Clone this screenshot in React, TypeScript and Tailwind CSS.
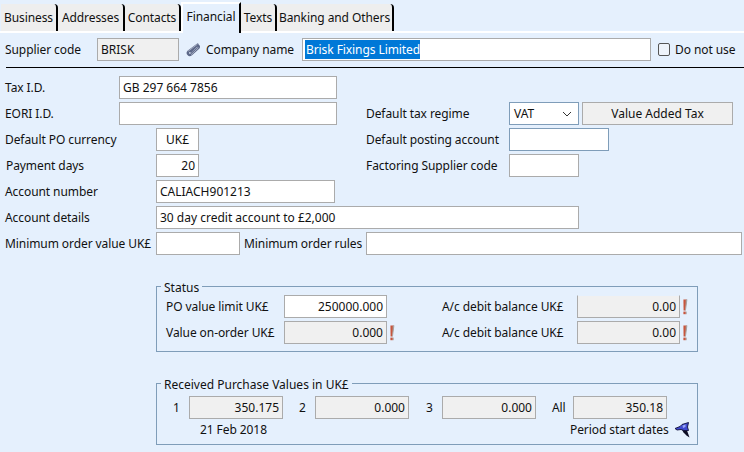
import type { ReactNode } from 'react';

const TABS = [
  { label: 'Business', width: 'w-[57px]' },
  { label: 'Addresses', width: 'w-[67px]' },
  { label: 'Contacts', width: 'w-[56px]' },
  { label: 'Financial', width: 'w-[60px]', active: true },
  { label: 'Texts', width: 'w-[36px]' },
  { label: 'Banking and Others', width: 'w-[117px]' },
];

interface FieldProps {
  value?: string;
  width: string;
  disabled?: boolean;
  right?: boolean;
  center?: boolean;
  blue?: boolean;
  className?: string;
}

function Field({ value, width, disabled, right, center, blue, className = '' }: FieldProps) {
  return (
    <div
      className={`h-[23px] shrink-0 border px-[3px] leading-[21px] whitespace-nowrap overflow-hidden ${width} ${
        disabled ? 'bg-[#f0f0f0]' : 'bg-white'
      } ${blue ? 'border-[#7f9db9]' : 'border-[#ababab]'} ${right ? 'text-right' : ''} ${center ? 'text-center' : ''} ${className}`}
    >
      {value}
    </div>
  );
}

function Row({ children, className = '' }: { children: ReactNode; className?: string }) {
  return <div className={`flex items-center h-[23px] mb-[3px] ${className}`}>{children}</div>;
}

function Label({ children, width }: { children: ReactNode; width: string }) {
  return <div className={`shrink-0 whitespace-nowrap tracking-[-0.08px] ${width}`}>{children}</div>;
}

function Alert() {
  return (
    <svg width="6" height="16" viewBox="0 0 6 16" className="ml-[2px] shrink-0">
      <path d="M1.4 0.5h3.4L3.4 11.5H1.6z" fill="#c8553d" />
      <path d="M3.8 0.5h1.6L3.9 11.5h-.7z" fill="#a9a3a0" />
      <rect x="1.4" y="12.6" width="2.4" height="2.6" fill="#c8553d" />
      <rect x="3.8" y="12.6" width="0.9" height="2.6" fill="#a9a3a0" />
    </svg>
  );
}

function PaperClip() {
  return (
    <svg width="16" height="16" viewBox="0 0 16 16" className="shrink-0">
      <path
        d="M12.6 2.6 3.6 9.4c-2 2 .5 4.8 2.6 3l7.2-6.6c1.3-1.3-.6-3-2-1.8L5.8 9.4"
        fill="none"
        stroke="#5d6888"
        strokeWidth="2.4"
        strokeLinecap="round"
      />
      <path
        d="M12.2 2.4 3.4 9M6.4 12.4l6.8-6.4"
        fill="none"
        stroke="#b9c0d2"
        strokeWidth="0.8"
        strokeLinecap="round"
      />
    </svg>
  );
}

function HandPointer() {
  return (
    <svg width="16" height="16" viewBox="0 0 16 16" className="shrink-0">
      <path d="M7 8 12 8.5 14.5 15.5 11.5 13.5 8.5 10.5z" fill="#0c0c24" />
      <path d="M0 6.5 5 4.5 7 2.5 13.5 0.5 12.5 5 13.5 8.5 9 8.5 6 7.5 2 8z" fill="#3f49cf" stroke="#10103a" strokeWidth="0.9" />
      <path d="M7.5 3.5 10.5 2.5 10.5 5 8 6z" fill="#9aa6f5" />
    </svg>
  );
}

export default function App() {
  return (
    <div className="w-[744px] h-[452px] overflow-hidden bg-[#e5f0fd] text-[#111] text-[12px] font-['Noto_Sans','Open_Sans',sans-serif]">
      {/* Tab strip */}
      <div className="flex items-end h-[33px] pl-[1px] border-b-2 border-white">
        {TABS.map(tab =>
          tab.active ? (
            <div
              key={tab.label}
              className={`h-[31px] -mb-[2px] bg-[#e5f0fd] border-t-2 border-l-2 border-white border-r-2 border-r-black text-center leading-[26px] tracking-[-0.08px] ${tab.width}`}
            >
              {tab.label}
            </div>
          ) : (
            <div
              key={tab.label}
              className={`h-[27px] bg-[#eeeeee] border-r-2 border-black text-center leading-[28px] tracking-[-0.08px] rounded-tr-sm ${tab.width}`}
            >
              {tab.label}
            </div>
          ),
        )}
      </div>

      {/* Supplier header */}
      <div className="flex items-center h-[23px] mt-[5px] pl-[5px]">
        <Label width="w-[92px]">Supplier code</Label>
        <Field value="BRISK" width="w-[82px]" disabled />
        <div className="ml-[6px] mr-[5px]">
          <PaperClip />
        </div>
        <Label width="w-[96px]">Company name</Label>
        <div className="h-[23px] w-[349px] shrink-0 border border-[#ababab] bg-white px-[2px] py-[1px]">
          <span className="inline-block h-[19px] leading-[19px] bg-[#0078d7] text-white pl-[1px] tracking-[-0.08px]">Brisk Fixings Limited</span>
        </div>
        <div className="ml-[7px] w-[12px] h-[13px] border border-[#555] rounded-[2px] bg-[#eef3fa]" />
        <div className="ml-[5px] whitespace-nowrap tracking-[-0.08px]">Do not use</div>
      </div>
      <div className="h-px bg-black ml-[6px] mt-[6px] mb-[8px]" />

      {/* Main form */}
      <div className="pl-[5px]">
        <Row>
          <Label width="w-[114px]">Tax I.D.</Label>
          <Field value="GB 297 664 7856" width="w-[218px]" />
        </Row>
        <Row>
          <Label width="w-[114px]">EORI I.D.</Label>
          <Field width="w-[218px]" />
          <Label width="w-[143px] ml-[29px]">Default tax regime</Label>
          <div className="h-[23px] w-[70px] shrink-0 border border-[#7f9db9] bg-white px-[4px] flex items-center justify-between">
            <span>VAT</span>
            <svg width="10" height="6" viewBox="0 0 10 6" className="mr-[2px]">
              <path d="M1 1l4 4 4-4" fill="none" stroke="#333" strokeWidth="1" />
            </svg>
          </div>
          <div className="h-[23px] w-[151px] ml-[3px] shrink-0 border border-[#ababab] bg-[#f0f0f0] text-center leading-[21px]">
            Value Added Tax
          </div>
        </Row>
        <Row>
          <Label width="w-[151px]">Default PO currency</Label>
          <Field value="UK£" width="w-[43px]" center />
          <Label width="w-[143px] ml-[167px]">Default posting account</Label>
          <Field width="w-[100px]" blue />
        </Row>
        <Row>
          <Label width="w-[151px] pl-[1px]">Payment days</Label>
          <Field value="20" width="w-[43px]" right />
          <Label width="w-[143px] ml-[167px]">Factoring Supplier code</Label>
          <Field width="w-[70px]" />
        </Row>
        <Row>
          <Label width="w-[151px]">Account number</Label>
          <Field value="CALIACH901213" width="w-[179px]" />
        </Row>
        <Row>
          <Label width="w-[151px]">Account details</Label>
          <Field value="30 day credit account to £2,000" width="w-[423px]" />
        </Row>
        <Row>
          <Label width="w-[151px]">Minimum order value UK£</Label>
          <Field width="w-[84px]" />
          <Label width="w-[122px] ml-[4px]">Minimum order rules</Label>
          <Field width="w-[376px]" />
        </Row>
      </div>

      {/* Status group */}
      <fieldset className="ml-[156px] mt-[22px] w-[542px] h-[75px] border border-[#7f9db9] pl-[9px]">
        <legend className="-ml-[5px] px-[3px] pt-[3px] -mb-[1px] leading-[16px]">Status</legend>
        <Row>
          <Label width="w-[118px]">PO value limit UK£</Label>
          <Field value="250000.000" width="w-[103px]" right />
          <Label width="w-[135px] ml-[55px]">A/c debit balance UK£</Label>
          <Field value="0.00" width="w-[103px]" disabled right className="border-t-[#e5f0fd]" />
          <Alert />
        </Row>
        <Row>
          <Label width="w-[118px]">Value on-order UK£</Label>
          <Field value="0.000" width="w-[103px]" disabled right />
          <Alert />
          <Label width="w-[135px] ml-[47px]">A/c debit balance UK£</Label>
          <Field value="0.00" width="w-[103px]" disabled right />
          <Alert />
        </Row>
      </fieldset>

      {/* Received values group */}
      <fieldset className="ml-[156px] mt-[22px] w-[542px] h-[71px] border border-[#7f9db9] pt-[3px]">
        <legend className="ml-[4px] px-[3px] pt-[3px] leading-[16px]">Received Purchase Values in UK£</legend>
        <div className="flex items-center h-[23px]">
          <Label width="w-[32px] pl-[16px]">1</Label>
          <Field value="350.175" width="w-[94px]" disabled right />
          <Label width="w-[32px] pl-[16px]">2</Label>
          <Field value="0.000" width="w-[94px]" disabled right />
          <Label width="w-[33px] pl-[17px]">3</Label>
          <Field value="0.000" width="w-[94px]" disabled right />
          <Label width="w-[37px] pl-[16px]">All</Label>
          <Field value="350.18" width="w-[94px]" disabled right />
        </div>
        <div className="flex items-center h-[20px] mt-[1px]">
          <Label width="w-[369px] pl-[43px]">21 Feb 2018</Label>
          <Label width="w-[105px] ml-[44px]">Period start dates</Label>
          <HandPointer />
        </div>
      </fieldset>
    </div>
  );
}
